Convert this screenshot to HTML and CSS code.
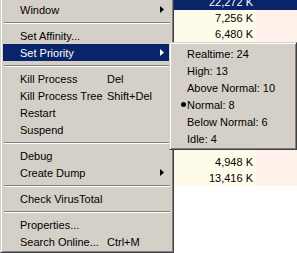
FILE: index.html
```html
<!DOCTYPE html>
<html>
  <head>
    <meta charset="utf-8" />
    <title>Process menu</title>
    <link rel="stylesheet" href="styles.css">
  </head>

  <body>
    <div class="list">
      <div class="row sel"><span class="num">22,272 K</span><span class="extra"></span></div>
      <div class="row"><span class="num">7,256 K</span><span class="extra"></span></div>
      <div class="row"><span class="num">6,480 K</span><span class="extra"></span></div>
      <div class="row"><span class="num"></span><span class="extra"></span></div>
      <div class="row"><span class="num"></span><span class="extra"></span></div>
      <div class="row"><span class="num"></span><span class="extra"></span></div>
      <div class="row"><span class="num"></span><span class="extra"></span></div>
      <div class="row"><span class="num"></span><span class="extra"></span></div>
      <div class="row"><span class="num"></span><span class="extra"></span></div>
      <div class="row"><span class="num"></span><span class="extra"></span></div>
      <div class="row"><span class="num">4,948 K</span><span class="extra"></span></div>
      <div class="row"><span class="num">13,416 K</span><span class="extra"></span></div>
    </div>

    <div class="menu main">
      <div class="item"><span class="label">Window</span><svg class="arrow" width="4" height="7"><polygon points="0,0 4,3.5 0,7" /></svg></div>
      <div class="sep"></div>
      <div class="item"><span class="label">Set Affinity...</span></div>
      <div class="item active"><span class="label">Set Priority</span><svg class="arrow" width="4" height="7"><polygon points="0,0 4,3.5 0,7" /></svg></div>
      <div class="sep"></div>
      <div class="item"><span class="label">Kill Process</span><span class="key">Del</span></div>
      <div class="item"><span class="label">Kill Process Tree</span><span class="key">Shift+Del</span></div>
      <div class="item"><span class="label">Restart</span></div>
      <div class="item"><span class="label">Suspend</span></div>
      <div class="sep"></div>
      <div class="item"><span class="label">Debug</span></div>
      <div class="item"><span class="label">Create Dump</span><svg class="arrow" width="4" height="7"><polygon points="0,0 4,3.5 0,7" /></svg></div>
      <div class="sep"></div>
      <div class="item"><span class="label">Check VirusTotal</span></div>
      <div class="sep"></div>
      <div class="item"><span class="label">Properties...</span></div>
      <div class="item"><span class="label">Search Online...</span><span class="key">Ctrl+M</span></div>
    </div>

    <div class="menu sub">
      <div class="item"><span class="check"></span>Realtime: 24</div>
      <div class="item"><span class="check"></span>High: 13</div>
      <div class="item"><span class="check"></span>Above Normal: 10</div>
      <div class="item"><span class="check"><span class="dot"></span></span>Normal: 8</div>
      <div class="item"><span class="check"></span>Below Normal: 6</div>
      <div class="item"><span class="check"></span>Idle: 4</div>
    </div>
  </body>
</html>
```

FILE: styles.css
```css
body {
  margin: 0;
  background: #fff;
  font-family: "Liberation Sans", Arial, sans-serif;
  font-size: 11px;
  overflow: hidden;
}
.list {
  margin-top: -6px;
}
.row {
  display: flex;
  height: 16px;
  line-height: 16px;
}
.num {
  width: 256px;
  box-sizing: border-box;
  padding-right: 3px;
  text-align: right;
  background: #fffbea;
}
.extra {
  flex: 1;
  background: #fff0ea;
}
.row.sel .num,
.row.sel .extra {
  background: #0a246a;
  color: #fff;
}

.menu {
  position: absolute;
  box-sizing: border-box;
  background: #d4d0c8;
  border: 1px solid;
  border-color: #d4d0c8 #404040 #404040 #d4d0c8;
  box-shadow: inset 1px 1px #fff, inset -1px -1px #808080;
  padding: 2px;
}
.main {
  left: 0;
  top: -2px;
  width: 174px;
}
.sub {
  left: 169px;
  top: 42px;
  width: 128px;
}
.item {
  display: flex;
  align-items: center;
  height: 17px;
  color: #000;
  white-space: nowrap;
}
.main .item {
  padding-left: 17px;
}
.item.active {
  background: #0a246a;
  color: #fff;
}
.label {
  flex: none;
  width: 87px;
}
.arrow {
  flex: none;
  margin-left: auto;
  margin-right: 7px;
  fill: #000;
}
.item.active .arrow {
  fill: #fff;
}
.sep {
  margin: 4px 1px 3px;
  border-top: 1px solid #808080;
  border-bottom: 1px solid #fff;
}
.check {
  flex: none;
  width: 15px;
  height: 17px;
  display: flex;
  align-items: center;
}
.dot {
  flex: none;
  width: 5px;
  height: 5px;
  margin-left: 9px;
  border-radius: 50%;
  background: #000;
}
```
